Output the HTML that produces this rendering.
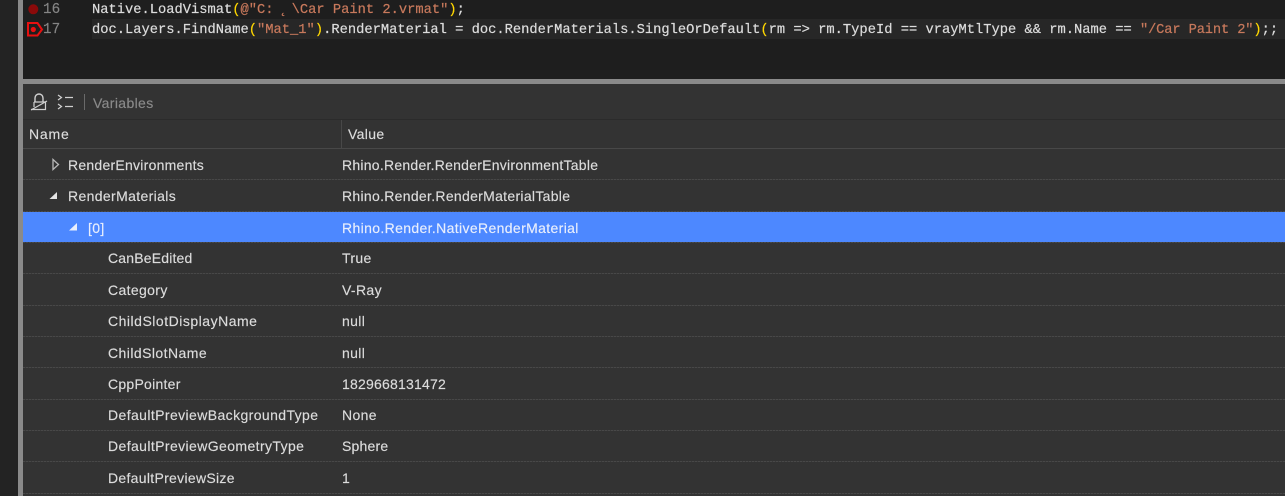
<!DOCTYPE html>
<html><head><meta charset="utf-8">
<style>
html,body{margin:0;padding:0;background:#333;}
#p{position:relative;width:1285px;height:496px;overflow:hidden;background:#333;font-family:"Liberation Sans",sans-serif;font-size:14px;color:#dcdcdc;}
.a{position:absolute;white-space:pre;}
.code{font-family:"Liberation Mono",monospace;font-size:13.75px;line-height:20px;color:#dcdcdc;-webkit-text-stroke:.2px currentColor;}
.s{color:#c8795c}.y{color:#ffd700}
.ln{font-family:"Liberation Mono",monospace;font-size:14.3px;color:#858585;line-height:20px;-webkit-text-stroke:.15px currentColor;}
.b{position:absolute;left:23px;width:1262px;height:1px;background:repeating-linear-gradient(90deg,#484848 0 2px,#3a3a3a 2px 3px);}
.t{position:absolute;white-space:pre;letter-spacing:.36px;line-height:20px;-webkit-text-stroke:.15px currentColor;}
</style></head><body>
<div id="p">
<div class="a" style="left:0;top:0;width:18px;height:496px;background:#232323"></div>
<div class="a" style="left:18px;top:0;width:5px;height:496px;background:#8a8a8a"></div>
<div class="a" style="left:23px;top:0;width:1262px;height:79px;background:#1e1e1e"></div>
<div class="a" style="left:92px;top:19px;width:1193px;height:20px;background:#272727"></div>
<div class="a" style="left:23px;top:79px;width:1262px;height:5px;background:#8a8a8a"></div>
<div class="a" style="left:23px;top:84px;width:1262px;height:35px;background:#333"></div>
<div class="a" style="left:23px;top:119px;width:1262px;height:1px;background:#2b2b2b"></div>

<svg class="a" style="left:24px;top:0" width="20" height="40" viewBox="0 0 20 40">
<circle cx="9.3" cy="9.3" r="5" fill="#8b0a0a"/>
<path d="M4 23H13.5L18 29.5L13.5 35.5H4Z" fill="none" stroke="#e81010" stroke-width="2"/>
<circle cx="9.3" cy="29.5" r="2.6" fill="#e81010"/>
</svg>
<div class="a ln" style="left:43px;top:0px">16</div>
<div class="a ln" style="left:43px;top:20px">17</div>
<div class="a code" style="left:92px;top:1px">Native.LoadVismat<span class="y">(</span><span class="s">@"C: <span style="margin-left:-3px;margin-right:4.5px">˛</span>\Car Paint 2.vrmat"</span><span class="y">)</span>;</div>
<div class="a code" style="left:92px;top:21px">doc.Layers.FindName<span class="y">(</span><span class="s">"Mat_1"</span><span class="y">)</span>.RenderMaterial = doc.RenderMaterials.SingleOrDefault<span class="y">(</span>rm =&gt; rm.TypeId == vrayMtlType &amp;&amp; rm.Name == <span class="s" style="letter-spacing:-.15px">"/Car Paint 2"</span><span class="y">)</span>;;</div>

<svg class="a" style="left:30px;top:92px" width="50" height="22" viewBox="0 0 50 22" fill="none" stroke="#d0d0d0">
<path d="M5 10V6A4 4 0 0 1 13 6V10" stroke-width="1.4"/>
<path d="M4 10H15.5V17.5H1" stroke-width="1.2"/>
<path d="M4 10V15" stroke-width="1.2"/>
<path d="M1 18L17 9" stroke-width="1.2"/>
<path d="M28 3L31.5 5.5L28 8M28 12L31.5 14.5L28 17M35 5.5H43M35 14.5H43" stroke-width="1.2"/>
</svg>
<div class="a" style="left:84px;top:94px;width:1px;height:16px;background:#6a6a6a"></div>
<div class="t" style="left:93px;top:93px;color:#8a8a8a">Variables</div>

<div class="a" style="left:341px;top:120px;width:1px;height:28px;background:#484848"></div>
<div class="t" style="left:29px;top:124px;letter-spacing:.8px">Name</div>
<div class="t" style="left:348px;top:124px">Value</div>
<div class="a" style="left:23px;top:148px;width:1262px;height:1px;background:#484848"></div>

<div class="a" style="left:23px;top:212px;width:1262px;height:30px;background:#4d88ff"></div>

<div class="b" style="top:179px"></div>
<div class="b" style="top:211px"></div>
<div class="b" style="top:242px"></div>
<div class="b" style="top:273px"></div>
<div class="b" style="top:305px"></div>
<div class="b" style="top:336px"></div>
<div class="b" style="top:367px"></div>
<div class="b" style="top:399px"></div>
<div class="b" style="top:430px"></div>
<div class="b" style="top:461px"></div>
<div class="b" style="top:493px"></div>

<svg class="a" style="left:48px;top:156px" width="34" height="84" viewBox="0 0 34 84">
<path d="M5 3.5L10.5 8.5L5 13.5Z" fill="none" stroke="#b8b8b8" stroke-width="1.3"/>
<path d="M9 36V43H1.5Z" fill="#e4e4e4"/>
<path d="M29 67V74.5H21Z" fill="#e8eefc"/>
</svg>

<div class="t" style="left:68px;top:155px;letter-spacing:.25px">RenderEnvironments</div><div class="t" style="left:342px;top:155px;letter-spacing:.25px">Rhino.Render.RenderEnvironmentTable</div>
<div class="t" style="left:68px;top:186px">RenderMaterials</div><div class="t" style="left:342px;top:186px;letter-spacing:.3px">Rhino.Render.RenderMaterialTable</div>
<div class="t" style="left:88px;top:218px;color:#e8eefc">[0]</div><div class="t" style="left:342px;top:218px;color:#e8eefc">Rhino.Render.NativeRenderMaterial</div>
<div class="t" style="left:108px;top:248px;letter-spacing:.18px">CanBeEdited</div><div class="t" style="left:342px;top:248px">True</div>
<div class="t" style="left:108px;top:280px">Category</div><div class="t" style="left:342px;top:280px">V-Ray</div>
<div class="t" style="left:108px;top:311px;letter-spacing:.51px">ChildSlotDisplayName</div><div class="t" style="left:342px;top:311px">null</div>
<div class="t" style="left:108px;top:343px;letter-spacing:.44px">ChildSlotName</div><div class="t" style="left:342px;top:343px">null</div>
<div class="t" style="left:108px;top:374px;letter-spacing:.26px">CppPointer</div><div class="t" style="left:342px;top:374px;letter-spacing:.21px">1829668131472</div>
<div class="t" style="left:108px;top:405px;letter-spacing:.4px">DefaultPreviewBackgroundType</div><div class="t" style="left:342px;top:405px">None</div>
<div class="t" style="left:108px;top:436px;letter-spacing:.4px">DefaultPreviewGeometryType</div><div class="t" style="left:342px;top:436px;letter-spacing:.2px">Sphere</div>
<div class="t" style="left:108px;top:468px;letter-spacing:.3px">DefaultPreviewSize</div><div class="t" style="left:342px;top:468px">1</div>
</div>
</body></html>
